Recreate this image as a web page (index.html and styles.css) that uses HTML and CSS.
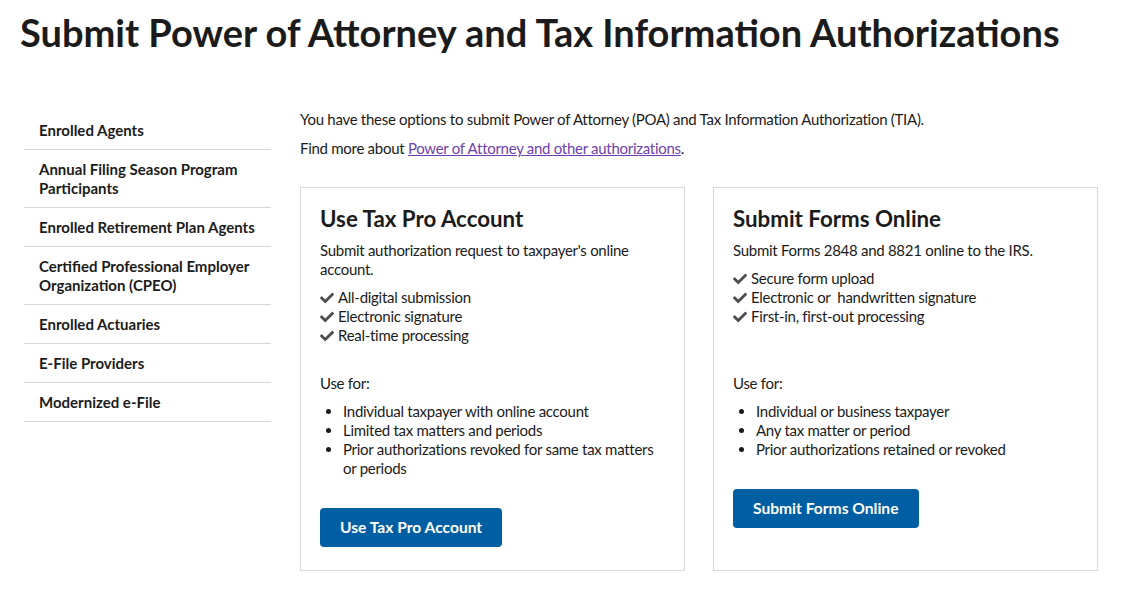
FILE: index.html
```html
<!DOCTYPE html>
<html lang="en">
<head>
<meta charset="utf-8">
<title>Submit Power of Attorney and Tax Information Authorizations</title>
<link rel="stylesheet" href="styles.css">
</head>
<body>
<h1 class="page-title">Submit Power of Attorney and Tax Information Authorizations</h1>
<div class="layout">
  <nav class="sidenav">
    <a class="sidenav-item" href="#">Enrolled Agents</a>
    <a class="sidenav-item" href="#">Annual Filing Season Program Participants</a>
    <a class="sidenav-item" href="#">Enrolled Retirement Plan Agents</a>
    <a class="sidenav-item" href="#">Certified Professional Employer Organization (CPEO)</a>
    <a class="sidenav-item" href="#">Enrolled Actuaries</a>
    <a class="sidenav-item" href="#">E-File Providers</a>
    <a class="sidenav-item" href="#">Modernized e-File</a>
  </nav>
  <main class="main">
    <p class="intro">You have these options to submit Power of Attorney (POA) and Tax Information Authorization (TIA).</p>
    <p class="intro">Find more about <a class="link" href="#">Power of Attorney and other authorizations</a>.</p>
    <div class="cards">
      <section class="card">
        <div class="card-top">
          <h2 class="card-title">Use Tax Pro Account</h2>
          <p class="card-desc">Submit authorization request to taxpayer's online account.</p>
          <ul class="checks">
            <li><svg class="check" viewBox="0 0 512 512"><path d="M173.9 439.4l-166.4-166.4c-10-10-10-26.2 0-36.2l36.2-36.2c10-10 26.2-10 36.2 0L192 312.7 432.1 72.6c10-10 26.2-10 36.2 0l36.2 36.2c10 10 10 26.2 0 36.2l-294.4 294.4c-10 10-26.2 10-36.2 0z"/></svg>All-digital submission</li>
            <li><svg class="check" viewBox="0 0 512 512"><path d="M173.9 439.4l-166.4-166.4c-10-10-10-26.2 0-36.2l36.2-36.2c10-10 26.2-10 36.2 0L192 312.7 432.1 72.6c10-10 26.2-10 36.2 0l36.2 36.2c10 10 10 26.2 0 36.2l-294.4 294.4c-10 10-26.2 10-36.2 0z"/></svg>Electronic signature</li>
            <li><svg class="check" viewBox="0 0 512 512"><path d="M173.9 439.4l-166.4-166.4c-10-10-10-26.2 0-36.2l36.2-36.2c10-10 26.2-10 36.2 0L192 312.7 432.1 72.6c10-10 26.2-10 36.2 0l36.2 36.2c10 10 10 26.2 0 36.2l-294.4 294.4c-10 10-26.2 10-36.2 0z"/></svg>Real-time processing</li>
          </ul>
        </div>
        <p class="use-for">Use for:</p>
        <ul class="bullets">
          <li>Individual taxpayer with online account</li>
          <li>Limited tax matters and periods</li>
          <li>Prior authorizations revoked for same tax matters or periods</li>
        </ul>
        <a class="button" href="#">Use Tax Pro Account</a>
      </section>
      <section class="card">
        <div class="card-top">
          <h2 class="card-title">Submit Forms Online</h2>
          <p class="card-desc">Submit Forms 2848 and 8821 online to the IRS.</p>
          <ul class="checks">
            <li><svg class="check" viewBox="0 0 512 512"><path d="M173.9 439.4l-166.4-166.4c-10-10-10-26.2 0-36.2l36.2-36.2c10-10 26.2-10 36.2 0L192 312.7 432.1 72.6c10-10 26.2-10 36.2 0l36.2 36.2c10 10 10 26.2 0 36.2l-294.4 294.4c-10 10-26.2 10-36.2 0z"/></svg>Secure form upload</li>
            <li><svg class="check" viewBox="0 0 512 512"><path d="M173.9 439.4l-166.4-166.4c-10-10-10-26.2 0-36.2l36.2-36.2c10-10 26.2-10 36.2 0L192 312.7 432.1 72.6c10-10 26.2-10 36.2 0l36.2 36.2c10 10 10 26.2 0 36.2l-294.4 294.4c-10 10-26.2 10-36.2 0z"/></svg>Electronic or&nbsp; handwritten signature</li>
            <li><svg class="check" viewBox="0 0 512 512"><path d="M173.9 439.4l-166.4-166.4c-10-10-10-26.2 0-36.2l36.2-36.2c10-10 26.2-10 36.2 0L192 312.7 432.1 72.6c10-10 26.2-10 36.2 0l36.2 36.2c10 10 10 26.2 0 36.2l-294.4 294.4c-10 10-26.2 10-36.2 0z"/></svg>First-in, first-out processing</li>
          </ul>
        </div>
        <p class="use-for">Use for:</p>
        <ul class="bullets">
          <li>Individual or business taxpayer</li>
          <li>Any tax matter or period</li>
          <li>Prior authorizations retained or revoked</li>
        </ul>
        <a class="button" href="#">Submit Forms Online</a>
      </section>
    </div>
  </main>
</div>
</body>
</html>
```

FILE: styles.css
```css
* { box-sizing: border-box; }

body {
  margin: 0;
  font-family: Lato, "Noto Sans", sans-serif;
  font-size: 15px;
  line-height: 19px;
  letter-spacing: -0.28px;
  color: #1b1b1b;
  background: #fff;
}

.page-title {
  margin: 8px 0 0 20px;
  font-size: 38px;
  line-height: 48px;
  font-weight: 700;
  letter-spacing: 0;
}

.layout {
  display: flex;
  gap: 29px;
  padding: 54px 0 0 24px;
}

.sidenav {
  width: 247px;
  flex: none;
  display: flex;
  flex-direction: column;
  padding-top: 1px;
}

.sidenav-item {
  display: block;
  padding: 10px 15px 9px;
  border-bottom: 1px solid #d6d6d6;
  color: #1b1b1b;
  font-weight: 700;
  font-size: 15px;
  letter-spacing: 0;
  text-decoration: none;
}

.main {
  width: 798px;
  flex: none;
}

.intro {
  margin: 0 0 10px;
}

.link {
  color: #6f3fae;
  text-decoration: underline;
}

.cards {
  display: grid;
  grid-template-columns: 385px 385px;
  gap: 28px;
  margin-top: 29px;
}

.card {
  border: 1px solid #d9d9d9;
  box-shadow: 0 1px 1px rgba(0, 0, 0, 0.08);
  padding: 17px 19px 21px;
  height: 384px;
}

.card-top {
  min-height: 140px;
}

.card-title {
  margin: 0 0 8px;
  font-size: 22.3px;
  line-height: 28px;
  font-weight: 700;
  letter-spacing: 0;
}

.card-desc {
  margin: 0 0 9px;
}

.checks {
  list-style: none;
  margin: 0;
  padding: 0;
}

.checks li {
  display: flex;
  align-items: center;
  gap: 4px;
}

.check {
  width: 14px;
  height: 14px;
  fill: #4d4d4d;
  flex: none;
}

.use-for {
  margin: 29px 0 9px;
}

.bullets {
  margin: 0 0 30px;
  padding-left: 23px;
}

.button {
  display: inline-block;
  padding: 10px 20px;
  background: #005ea2;
  color: #fff;
  font-weight: 700;
  font-size: 15.6px;
  letter-spacing: 0;
  text-decoration: none;
  border-radius: 4px;
}
```
